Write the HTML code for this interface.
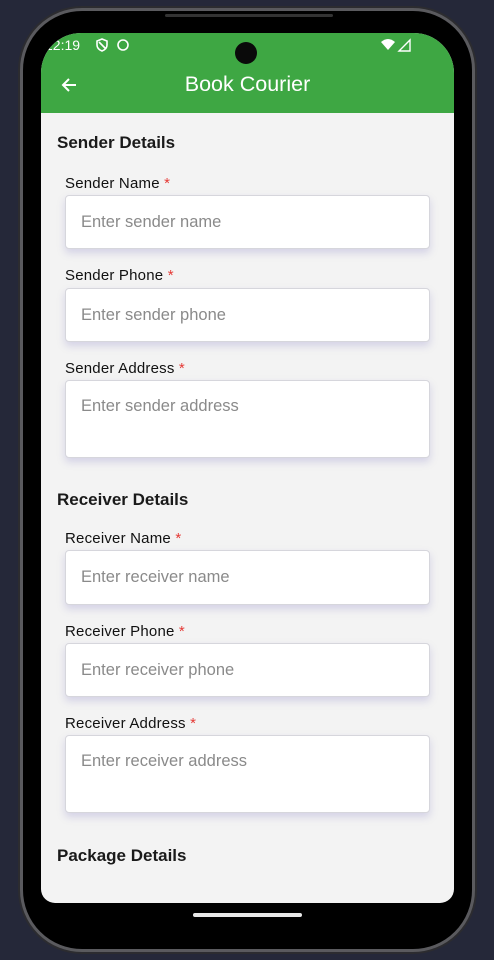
<!DOCTYPE html>
<html><head><meta charset="utf-8"><style>
*{margin:0;padding:0;box-sizing:border-box}
body{width:494px;height:960px;overflow:hidden;background:#252839;font-family:"Liberation Sans",sans-serif;position:relative}
.frame{position:absolute;left:20px;top:8px;width:455px;height:944px;border-radius:62px;background:#000;border:3px solid #5a5a5e;box-shadow:0 0 0 2px #2c2c30}
.screen{position:absolute;left:41px;top:33px;width:413px;height:870px;border-radius:40px 40px 14px 14px;overflow:hidden;background:#f3f3f3}
.bar{position:absolute;left:0;top:0;width:413px;height:80px;background:#3ea743}
.abs{position:absolute}
.h{position:absolute;left:16px;font-weight:bold;font-size:17px;color:#1a1a1a}
.lbl{position:absolute;left:24px;font-size:15px;color:#111;letter-spacing:.2px}
.lbl span{color:#e53935}
.in{position:absolute;left:24px;width:365px;background:#fff;border:1px solid #d6d6dc;border-radius:4px;box-shadow:0 4px 8px rgba(120,110,190,.25);font-size:16.5px;color:#8a8a8a;padding-left:15px}
</style></head><body>
<div class="frame"></div>
<div class="abs" style="left:165px;top:14px;width:168px;height:3px;background:#333;border-radius:2px"></div>
<div class="screen">
 <div class="bar"></div>
 <div class="abs" style="left:4px;top:4px;color:#fff;font-size:14px">12:19</div>
 <svg class="abs" style="left:54px;top:5px" width="14" height="14" viewBox="0 0 14 14"><path d="M7 1 L12 3 V7 C12 10 9.5 12 7 13 C4.5 12 2 10 2 7 V3 Z M4 4 L10 10" stroke="#fff" stroke-width="1.6" fill="none"/></svg>
 <svg class="abs" style="left:76px;top:6px" width="12" height="12"><circle cx="6" cy="6" r="5" stroke="#fff" stroke-width="1.6" fill="none"/></svg>
 <div class="abs" style="left:194px;top:9px;width:22px;height:22px;border-radius:50%;background:#0a0a0a"></div>
 <svg class="abs" style="left:340px;top:5px" width="32" height="14"><path d="M0 4 Q7 -2 14 4 L7 12 Z" fill="#fff"/><path d="M29 2 V13 H18 Z" stroke="#fff" stroke-width="1.4" fill="none"/></svg>
 <svg class="abs" style="left:19px;top:43px" width="18" height="18" viewBox="0 0 18 18"><path d="M16 9 H3 M9 3 L3 9 L9 15" stroke="#fff" stroke-width="2" fill="none"/></svg>
 <div class="abs" style="left:0;width:413px;top:39px;text-align:center;color:#fff;font-size:21.5px">Book Courier</div>

 <div class="h" style="top:100px">Sender Details</div>
 <div class="lbl" style="top:142px">Sender Name <span>*</span></div>
 <div class="in" style="top:162px;height:54px;line-height:52px">Enter sender name</div>
 <div class="lbl" style="top:234px">Sender Phone <span>*</span></div>
 <div class="in" style="top:255px;height:54px;line-height:52px">Enter sender phone</div>
 <div class="lbl" style="top:327px">Sender Address <span>*</span></div>
 <div class="in" style="top:347px;height:78px;padding-top:16px">Enter sender address</div>

 <div class="h" style="top:457px">Receiver Details</div>
 <div class="lbl" style="top:497px">Receiver Name <span>*</span></div>
 <div class="in" style="top:517px;height:55px;line-height:53px">Enter receiver name</div>
 <div class="lbl" style="top:590px">Receiver Phone <span>*</span></div>
 <div class="in" style="top:610px;height:54px;line-height:52px">Enter receiver phone</div>
 <div class="lbl" style="top:682px">Receiver Address <span>*</span></div>
 <div class="in" style="top:702px;height:78px;padding-top:16px">Enter receiver address</div>

 <div class="h" style="top:813px">Package Details</div>
</div>
<div class="abs" style="left:193px;top:913px;width:109px;height:4px;background:#e8e8e8;border-radius:2px"></div>
</body></html>
